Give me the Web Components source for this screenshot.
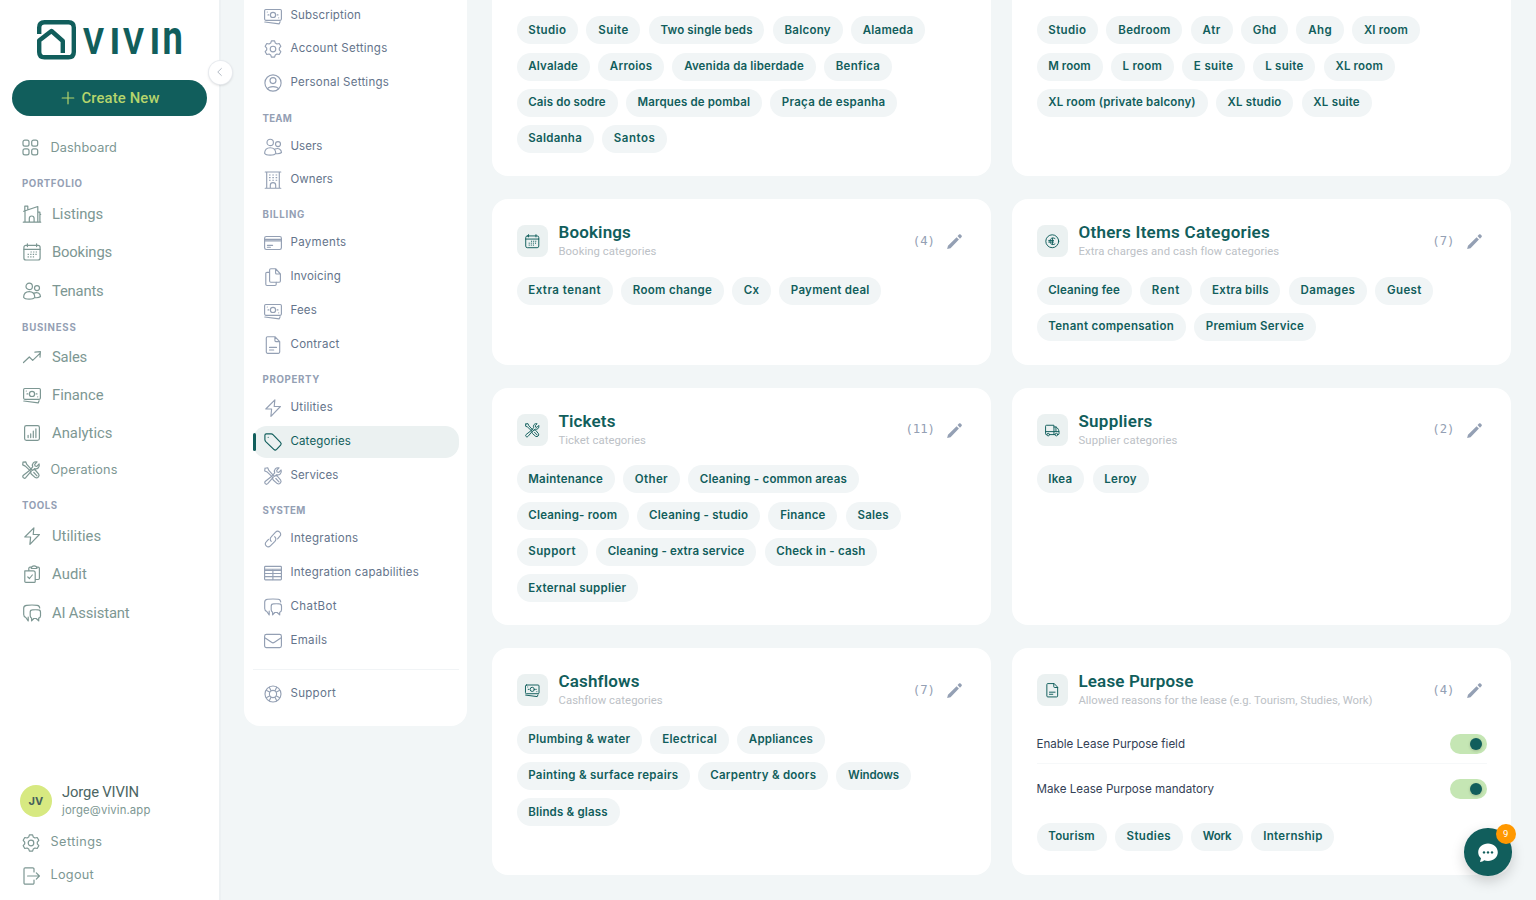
<!DOCTYPE html>
<html lang="en">
<head>
<meta charset="utf-8">
<title>VIVIN – Categories</title>
<style>
html,body{margin:0;height:100%;overflow:hidden}
body{background:#f2f6f7;font-family:Roboto,"Liberation Sans",sans-serif}
</style>
</head>
<body>
<vv-app></vv-app>
<script>
const ICONS = {
grid:'<rect x="1" y="1.2" width="6" height="6" rx="1.9"/><rect x="9.700" y="1.2" width="6" height="6" rx="1.9"/><rect x="1" y="9.900" width="6" height="6" rx="1.9"/><rect x="9.700" y="9.900" width="6" height="6" rx="1.9"/>',
house:'<path d="M.3 17.2h17.4M2 17V6M.7 6.3 14.8 1.5v15.5M1.8 5.7V1.2h3v3.6M14.8 7.2h2.1V17M6.3 17v-3.600a2.4 2.4 0 0 1 4.8 0V17M16.9 9.3h.8"/>',
calendar:'<rect x=".9" y="2.4" width="16.2" height="14.6" rx="2"/><path d="M.9 6.3h16.2M4.4.8v2.8M13.6.8v2.8"/><path stroke-dasharray="1.3 1.3" stroke-linecap="butt" d="M7.5 9h6.6M4.6 11.4h9.5M4.6 13.8h6.6"/>',
users:'<circle cx="6.2" cy="4.4" r="3.2"/><circle cx="14" cy="6.1" r="2.5"/><path d="M.6 15.2c.2-3.8 2.5-5.5 5.6-5.5s5.4 1.7 5.6 5.5c-1.6 2.6-9.7 2.6-11.2 0ZM11.1 11.1c3.1-1.4 6.2 0 6.4 3.4-1 1-3 1.4-5.3 1.2"/>',
trend:'<path d="m.5 14.5 5.800-5.500 3.400 3.400 7-6.800M11.900 4.200l5.500-.5-.4 5.400"/>',
cash:'<rect x=".6" y="2.500" width="16.8" height="10.800" rx="1.2"/><circle cx="9" cy="7.900" r="2.600"/><path d="M3.3 5v.01M14.7 10.800v.01M4 7.900h.8M13.2 7.900h.8M.8 15l14.400 1.900.9-2.200"/>',
chart:'<rect x="1.6" y="1.6" width="14.8" height="14.8" rx="1.8"/><path d="M5.1 13.6v-2.3M7.7 13.6V9.8M10.3 13.6V7M12.9 13.6V4.8"/>',
tools:'<path d="M1 1.2 3.7.8l1.1 2.6 5 5.5M1 1.2.7 3.9l2.6 1.2 5 4.8M10.3 9.2c1-.8 1.7-.9 2.9-.2l3.5 4.2c1.3 2-1.3 4.7-3.4 3.4L9.2 13c-.8-1-.7-2 .1-2.8M11.8 11.5l3.2 3.3M7.8 9.3l-6.4 5c-1.8 1.6.6 4 2.3 2.4l5.6-6.6M8 9l2.7-3.2C9.6 2.7 12 .2 15 .9l-2.3 2.5.4 1.6 1.7.4L17.1 3c.9 2.9-1.4 5.6-4.5 4.7l-2 1.7"/>',
bolt:'<path d="M10.9.8 1.8 10h5.8l-.7 7.4L16.4 7.5h-6.2Z"/>',
audit:'<path d="M1.800 5.800h8.400a2 2 0 0 1 2 2v8.600a1 1 0 0 1-1 1H2.800a1 1 0 0 1-1-1ZM5.800 5.500V3.400a1.2 1.2 0 0 1 1.2-1.2h1.100M14 2.2h1.2a1.2 1.2 0 0 1 1.2 1.2v9.9a1.2 1.2 0 0 1-1.2 1.2h-2.6M8.3 3.500c0-3.600 5.600-3.600 5.600 0ZM4.800 12l1.700 1.500 2.800-3.500"/>',
chat:'<path d="M5.200 13.100v3.800L2.800 13.500C1.300 12.900.7 11.900.7 10.500V4.100C.7 2.400 1.900 1.500 3.600 1.300c3.300-.4 7.400-.4 10.700 0 1.500.2 2.300 1 2.400 2.700M8.600 14.200c-.9-.5-1.400-1.300-1.400-2.400V8.200c0-1.300.7-2.200 2-2.300 2-.2 4.400-.2 6.300 0 1.300.1 2 1 2 2.300v3.600c0 1.400-.7 2.100-1.800 2.400v2.700l-2.500-2.400h-2.400l-2.200 2.400v-2.600"/>',
gear:'<path d="M7.4.9h3.2l.7 2.2 1.600.9 2.300-.5 1.600 2.800-1.500 1.800v1.800l1.500 1.800-1.600 2.800-2.300-.5-1.600.9-.7 2.200H7.400l-.7-2.200-1.600-.9-2.300.5-1.600-2.800 1.500-1.800V8.100L1.200 6.300l1.600-2.800 2.300.5 1.600-.9Z"/><circle cx="9" cy="9" r="2.800"/>',
logout:'<path d="M12 5V2a1.2 1.2 0 0 0-1.2-1.2H3.2A1.2 1.2 0 0 0 2 2v14a1.2 1.2 0 0 0 1.2 1.2h7.6A1.2 1.2 0 0 0 12 16v-3M5.6 9h11.6M14.3 5.9 17.4 9l-3.1 3.1"/>',
profile:'<circle cx="9" cy="9" r="8.1"/><circle cx="9" cy="6.6" r="3"/><path d="M3.6 14.8c1.300-3 9.500-3 10.800 0"/>',
building:'<path d="M1.2 1h15.6M1.2 17.2h15.6M2.7 1v16M15.3 1v16M6.3 17v-2.7a2.7 2.7 0 0 1 5.4 0V17"/><path stroke-dasharray="1.6 1.7" stroke-linecap="butt" d="M5 4h9M5 6.6h9M5 9.2h9"/>',
card:'<rect x=".6" y="2.5" width="16.8" height="13" rx="1.7"/><path d="M.6 5.4h16.8M.6 6.8h16.8M3.4 11.3h5.2M3.4 13.2h3"/>',
files:'<path d="M5.6 4.3H3a1.2 1.2 0 0 0-1.2 1.2v10.8A1.2 1.2 0 0 0 3 17.5h8a1.2 1.2 0 0 0 1.2-1.2v-2.2M11.6.7H6.8a1.2 1.2 0 0 0-1.2 1.2V13a1.2 1.2 0 0 0 1.2 1.2h8.4a1.2 1.2 0 0 0 1.2-1.2V6ZM11.6.7V5a1 1 0 0 0 1 1h3.8"/>',
file:'<path d="M10.9.7H3.5a1.2 1.2 0 0 0-1.2 1.2v14.2a1.2 1.2 0 0 0 1.2 1.2h11a1.2 1.2 0 0 0 1.2-1.2V5.7ZM10.9.7v3.9a1 1 0 0 0 1 1h3.8M5.5 11.4h7M5.5 14h4.2"/>',
tag:'<path d="M.9 2.3c0-1 .5-1.4 1.4-1.4h4.9c.8 0 1.4.3 2 .9l7.3 7.6c1 1 1 1.8.1 2.8l-4 4.2c-1 1-1.8 1-2.8 0L2 8.8C1.3 8 .9 7.5.9 6.7Z"/><path d="M4.2 4.2h.01"/>',
link:'<path d="M7.2 11.4c-1.4-1.4-1.3-3.3 0-4.6l4.4-4.6c2.5-2.7 6.9 1.2 4.3 4l-2.3 2.6M10.7 6.7c1.5 1.3 1.5 3.3.2 4.7l-4.5 4.5c-2.8 2.7-7-1.4-4.2-4.1l2.3-2.5"/>',
table:'<rect x=".6" y="2.4" width="16.8" height="13.4" rx=".8"/><path d="M.6 5.2h16.8M.6 6.5h16.8M.6 9.5h16.8M.6 12.6h16.8M8.9 6.4v9.2"/>',
mail:'<rect x=".6" y="2.4" width="16.8" height="13.2" rx="1.8"/><path d="m1.2 6 6.3 4.3c1 .7 2 .7 3 0L16.8 6"/>',
support:'<circle cx="9" cy="9" r="8"/><circle cx="9" cy="9" r="3.6"/><path d="m5.3 2.2 1.6 3.4M2.2 5.3l3.4 1.6M12.7 2.2l-1.6 3.4M15.8 5.3l-3.4 1.6M5.3 15.8l1.6-3.4M2.2 12.7l3.4-1.6M12.7 15.8l-1.6-3.4M15.8 12.7l-3.4-1.6"/>',
euro:'<circle cx="9" cy="9" r="8"/><path d="M12.3 5.600c-3.400-2.100-6 .1-6 3.400s2.600 5.500 6 3.400M9.200 5.300v7.400M4.600 8h6M4.600 10h6"/>',
truck:'<path d="M2.2 14.4H1.7a1 1 0 0 1-1-1V4a1.2 1.2 0 0 1 1.2-1.2h9.2v11.6M11.1 4.9h2.6c2.5 1.4 3.7 4 3.7 7v1.5a1 1 0 0 1-1 1M5.7 14.4h6.6M.7 10.7h16.5"/><circle cx="4" cy="14.4" r="1.6"/><circle cx="14.2" cy="14.4" r="1.6"/><path d="M13.6 5v5.5"/>',
plus:'<path d="M9 3.2v11.6M3.2 9h11.6"/>',
left:'<path d="M11.5 2.7 5 9l6.5 6.3"/>',
pencil:'<path fill="currentColor" stroke="none" d="M1.200 17l.9-3.600L11.200 4.400l2.500 2.500L4.800 16.100ZM12.200 3.300l1.600-1.700c.5-.5 1.100-.5 1.600 0l1.100 1.100c.5.5.5 1.100 0 1.600L14.800 6Z"/>'
};

const define = (name, css, html, setup) => customElements.define(name, class extends HTMLElement {
  connectedCallback(){
    if (this.shadowRoot) return;
    const root = this.attachShadow({mode:'open'});
    root.innerHTML = `<style>${css}</style>` + (typeof html === 'function' ? html(this) : html);
    if (setup) setup(this, root);
  }
});

/* Single-line label whose tracking is adjusted to fill the width given in "w". */
define('vv-label', ':host{display:block;white-space:nowrap;flex:none}span{display:inline-block}', '<span><slot></slot></span>', (el, root) => {
  const w = +el.getAttribute('w'); if (!w) return;
  const s = root.querySelector('span');
  s.style.letterSpacing = '0px';
  s.style.letterSpacing = (w - s.getBoundingClientRect().width) / el.textContent.length + 'px';
  el.style.width = w + 'px';
});

define('vv-icon', ':host{display:block;width:18px;height:18px;flex:none}svg{display:block;width:100%;height:100%;overflow:visible}',
  el => `<svg viewBox="0 0 18 18" fill="none" stroke="currentColor" stroke-width="${el.getAttribute('sw')||1.1}" stroke-linecap="round" stroke-linejoin="round">${ICONS[el.getAttribute('name')]}</svg>`);

define('vv-logo', `:host{display:block;padding:9px 0 0 36px;height:52px;color:#115e5c}svg{display:block}text{font:700 37px Roboto,sans-serif;fill:currentColor}`,
  `<svg width="170" height="70" viewBox="0 -10 170 70"><path fill="none" stroke="currentColor" stroke-width="4.4" stroke-linejoin="round" d="M3.200 15V8.500Q3.200 3.200 8.500 3.200H32.500Q37.800 3.200 37.800 8.500V33Q37.800 38.300 32.500 38.300H8.500Q3.200 38.300 3.200 33V21.500L15.500 12 26.800 22V34"/>
  <text x="47" y="35" textLength="21" lengthAdjust="spacingAndGlyphs">V</text><text x="73.500" y="35">I</text><text x="87" y="35" textLength="21" lengthAdjust="spacingAndGlyphs">V</text><text x="113.500" y="35">I</text><text transform="translate(126.500 35) scale(.74 1)" style="font-size:49px">n</text></svg>`);

define('vv-nav', `:host{display:flex;align-items:center;flex:none;box-sizing:border-box;color:#7d9793;font-size:14.800px}
  :host([small]){font:12.700px Inter,sans-serif}vv-icon{margin-right:11px}:host([small]) vv-icon{margin-right:10.500px}:host([small]) vv-label{padding-bottom:1.500px}`,
  el => `<vv-icon name="${el.getAttribute('icon')}" sw="1.200"></vv-icon><vv-label w="${el.getAttribute('w')}">${el.getAttribute('text')}</vv-label>`,
  el => { el.style.height = el.getAttribute('h') + 'px'; el.style.marginTop = (el.getAttribute('mt')||0) + 'px';
    el.style.paddingLeft = el.hasAttribute('small') ? '22px' : '23px'; });

define('vv-heading', ':host{display:flex;align-items:center;flex:none;font:700 9.700px Inter,sans-serif;color:#94a0b4}',
  el => `<vv-label w="${el.getAttribute('w')}">${el.getAttribute('text')}</vv-label>`,
  el => { el.style.height = (el.getAttribute('h')||21) + 'px'; el.style.marginTop = (el.getAttribute('mt')||0) + 'px'; });

define('vv-create', `:host{display:flex;align-items:center;box-sizing:border-box;margin:19px 12px 0;height:35.500px;border-radius:18px;background:#115e5c;color:#b6d56c;font-size:14.800px;font-weight:500;padding-left:47px}
  vv-icon{margin-right:4.500px}vv-label{padding-top:1px}`, `<vv-icon name="plus" sw="1.200"></vv-icon><vv-label w="78">Create New</vv-label>`);

define('vv-user', `:host{display:flex;align-items:center;height:36px;padding-left:20px;margin-bottom:7px}
  .a{width:32px;height:32px;border-radius:50%;background:#d7e981;color:#45605c;display:flex;align-items:center;justify-content:center;font:700 11px Inter,sans-serif;margin-right:10px}
  .n{font-size:14.800px;line-height:18px;color:#4c6663;padding-top:1px}.e{font:11.300px/18px Inter,sans-serif;color:#7d9793}`,
  `<div class="a"><vv-label w="15">JV</vv-label></div><div><vv-label class="n" w="77">Jorge VIVIN</vv-label><vv-label class="e" w="88.500">jorge@vivin.app</vv-label></div>`);

define('vv-sidebar', `:host{display:flex;flex-direction:column;position:relative;box-sizing:border-box;width:221px;height:900px;background:#fff;border-right:2px solid #edf1f3;flex:none}
  vv-heading{padding-left:22px}.foot{margin-top:auto;padding-bottom:8px}
  .toggle{position:absolute;left:208.500px;top:60.500px;width:23px;height:23px;border-radius:50%;background:#fff;box-shadow:0 0 0 1px #e8ebef,0 1px 3px #0003;display:flex;align-items:center;justify-content:center;color:#b4bcc6}
  .toggle vv-icon{width:10px;height:10px}`,
  () => { const n=(icon,text,w,h=38,mt=0,s='')=>`<vv-nav icon="${icon}" text="${text}" w="${w}" h="${h}" mt="${mt}" ${s}></vv-nav>`;
  return `<vv-logo></vv-logo><vv-create></vv-create>
  ${n('grid','Dashboard',66.5,34,15.5,'small')}
  <vv-heading text="PORTFOLIO" w="60.500" mt="7" h="23"></vv-heading>
  ${n('house','Listings',51)}${n('calendar','Bookings',60)}${n('users','Tenants',51.5,38,1)}
  <vv-heading text="BUSINESS" w="54.500" mt="7"></vv-heading>
  ${n('trend','Sales',35)}${n('cash','Finance',51.5)}${n('chart','Analytics',60.5)}${n('tools','Operations',67,36,0,'small')}
  <vv-heading text="TOOLS" w="35.500" mt="7"></vv-heading>
  ${n('bolt','Utilities',49,38,1)}${n('audit','Audit',35)}${n('chat','AI Assistant',77.5,38,1)}
  <div class="foot"><vv-user></vv-user>${n('gear','Settings',52,34,0.5,'small')}${n('logout','Logout',43.5,33,-.5,'small')}</div>
  <div class="toggle"><vv-icon name="left" sw="1.800"></vv-icon></div>`; });

define('vv-setting', `:host{display:flex;align-items:center;box-sizing:border-box;height:32px;padding-left:11px;flex:none;font:11.500px Inter,sans-serif;color:#64748b;border-radius:14px;position:relative}
  vv-icon{color:#94a0b4;margin-right:9px}vv-label{padding-bottom:1.500px}
  :host([active]){background:#ebf1f1;color:#115e5c}:host([active]) vv-icon{color:#115e5c}
  :host([active])::before{content:"";position:absolute;left:0;top:7px;width:3px;height:18px;border-radius:1.500px;background:#115e5c}`,
  el => `<vv-icon name="${el.getAttribute('icon')}" sw="1.150"></vv-icon><vv-label w="${el.getAttribute('w')}">${el.getAttribute('text')}</vv-label>`,
  el => el.style.marginTop = el.getAttribute('mt') + 'px');

define('vv-settings', `:host{display:block;box-sizing:border-box;width:223px;height:725.500px;background:#fff;border-radius:0 0 16px 16px;padding:0 8.500px;flex:none;margin-left:23px;overflow:hidden}
  .in{display:flex;flex-direction:column}vv-heading{padding-left:10px}hr{border:0;height:1px;width:100%;background:#f1f4f6;margin:12.500px 0 0;flex:none}`,
  () => { const s=(icon,text,w,mt=2,a='')=>`<vv-setting icon="${icon}" text="${text}" w="${w}" mt="${mt}" ${a}></vv-setting>`;
  const h=(text,w,mt)=>`<vv-heading text="${text}" w="${w}" mt="${mt}" h="20"></vv-heading>`;
  return `<div class="in">${s('cash','Subscription',70.5,-.5)}${s('gear','Account Settings',97,1)}${s('profile','Personal Settings',98.5)}
  ${h('TEAM',29.5,9.5)}${s('users','Users',32,2.5)}${s('building','Owners',42.5,1)}
  ${h('BILLING',42.5,9)}${s('card','Payments',56)}${s('files','Invoicing',50.5)}${s('cash','Fees',26.5)}${s('file','Contract',49)}
  ${h('PROPERTY',57.5,9)}${s('bolt','Utilities',42.5,2)}${s('tag','Categories',60.5,2.5,'active')}${s('tools','Services',48,1.5)}
  ${h('SYSTEM',43,9)}${s('link','Integrations',68)}${s('table','Integration capabilities',128.5)}${s('chat','ChatBot',46.5)}${s('mail','Emails',37)}
  <hr>${s('support','Support',45.5,7.5)}</div>`; });

define('vv-chip', ':host{display:flex;align-items:center;justify-content:center;box-sizing:border-box;height:28px;padding-bottom:1.500px;border-radius:14px;background:#f1f5f6;color:#115e5c;font:600 11.500px Inter,sans-serif;flex:none}',
  el => `<vv-label w="${el.getAttribute('w')-23.5}">${el.getAttribute('text')}</vv-label>`, el => el.style.width = el.getAttribute('w') + 'px');

define('vv-chips', ':host{display:flex;flex-wrap:wrap;gap:8.300px}', el => el.getAttribute('items').split(';').map(i => {
  const [t,w] = i.split('|'); return `<vv-chip text="${t.replace('&','&amp;')}" w="${w}"></vv-chip>`; }).join(''));

define('vv-switch', ':host{display:flex;align-items:center;justify-content:flex-end;box-sizing:border-box;width:37px;height:20px;border-radius:10px;background:#c5e6b4;padding-right:4.500px}i{width:12px;height:12px;border-radius:50%;background:#115e5c;box-shadow:0 1px 3px #0003}', '<i></i>');

define('vv-toggle-row', ':host{display:flex;align-items:center;justify-content:space-between;font:11.600px Inter,sans-serif;color:#334155;box-sizing:border-box}',
  el => `<vv-label w="${el.getAttribute('w')}">${el.getAttribute('text')}</vv-label><vv-switch></vv-switch>`);

define('vv-card', `:host{display:block;box-sizing:border-box;background:#fff;border-radius:16px;padding:26.500px 24px 0 24.500px}
  :host([cut]){border-radius:0 0 16px 16px;padding-top:16.300px}
  header{display:flex;align-items:center;height:32px;margin-bottom:19.300px}
  .b{width:31.500px;height:32px;border-radius:8px;background:#ebf1f1;color:#115e5c;display:flex;align-items:center;justify-content:center;margin-right:10.500px;flex:none}
  .b vv-icon{width:14.500px;height:14.500px}
  .t{font-size:17px;font-weight:600;color:#115e5c;line-height:20px}.s{font-size:11.300px;color:#bcc1c6;line-height:17px;padding-top:1px}
  .h{margin-top:-1px}.c{margin-left:auto;font:12.300px "DejaVu Sans Mono",monospace;color:#94a0b4;margin-right:11px;margin-top:-1.500px}
  .p{color:#94a0b4;width:17px;height:17px;margin-right:4px}`,
  el => { const g = a => el.getAttribute(a); return (g('name') ? `<header><div class="b"><vv-icon name="${g('icon')}" sw="1.200"></vv-icon></div>
  <div class="h"><vv-label class="t" w="${g('tw')}">${g('name')}</vv-label><vv-label class="s" w="${g('sw')}">${g('sub')}</vv-label></div>
  <span class="c">(${g('count')})</span><vv-icon class="p" name="pencil"></vv-icon></header>` : '') + `<slot></slot>`; });

define('vv-board', `:host{display:grid;grid-template-columns:499px 498.500px;grid-template-rows:176px 166px 237.500px 227.500px;column-gap:21px;row-gap:22.800px;margin-left:25px;flex:none}
  .r1{height:39px;border-bottom:1px solid #f6f8f9;margin-top:-1px}.r2{height:51px;margin-bottom:8px}`,
  `<vv-card cut><vv-chips items="Studio|61.7;Suite|54;Two single beds|115.6;Balcony|70;Alameda|74;Alvalade|73.3;Arroios|66;Avenida da liberdade|143.3;Benfica|68;Cais do sodre|101;Marques de pombal|136;Praça de espanha|127;Saldanha|77.3;Santos|65"></vv-chips></vv-card>
  <vv-card cut><vv-chips items="Studio|61.7;Bedroom|76;Atr|42;Ghd|47;Ahg|47.5;XI room|67.5;M room|66;L room|63;E suite|63;L suite|62;XL room|71;XL room (private balcony)|171;XL studio|77.5;XL suite|70"></vv-chips></vv-card>
  <vv-card icon="calendar" name="Bookings" tw="72.500" sub="Booking categories" sw="98" count="4"><vv-chips items="Extra tenant|96.3;Room change|102.7;Cx|38.7;Payment deal|102.3"></vv-chips></vv-card>
  <vv-card icon="euro" name="Others Items Categories" tw="191.500" sub="Extra charges and cash flow categories" sw="200.500" count="7"><vv-chips items="Cleaning fee|95.2;Rent|52;Extra bills|80.2;Damages|78.3;Guest|58;Tenant compensation|149.3;Premium Service|121.6"></vv-chips></vv-card>
  <vv-card icon="tools" name="Tickets" tw="57" sub="Ticket categories" sw="87.500" count="11"><vv-chips items="Maintenance|98.3;Other|56.7;Cleaning - common areas|170.7;Cleaning- room|112.5;Cleaning - studio|122.8;Finance|69;Sales|55;Support|71.2;Cleaning - extra service|160.3;Check in - cash|112.6;External supplier|121.6"></vv-chips></vv-card>
  <vv-card icon="truck" name="Suppliers" tw="74" sub="Supplier categories" sw="99" count="2"><vv-chips items="Ikea|47.8;Leroy|56"></vv-chips></vv-card>
  <vv-card icon="cash" name="Cashflows" tw="81" sub="Cashflow categories" sw="104" count="7"><vv-chips items="Plumbing & water|125.7;Electrical|78.3;Appliances|87.7;Painting & surface repairs|173.7;Carpentry & doors|129.5;Windows|74.5;Blinds & glass|103"></vv-chips></vv-card>
  <vv-card icon="file" name="Lease Purpose" tw="115" sub="Allowed reasons for the lease (e.g. Tourism, Studies, Work)" sw="294" count="4"><vv-toggle-row class="r1" text="Enable Lease Purpose field" w="148.500"></vv-toggle-row><vv-toggle-row class="r2" text="Make Lease Purpose mandatory" w="177.500"></vv-toggle-row><vv-chips items="Tourism|70;Studies|68;Work|52;Internship|83"></vv-chips></vv-card>`);

define('vv-chat', `:host{position:absolute;left:1464px;top:828px;width:47.500px;height:47.500px;border-radius:50%;background:#115e5c;box-shadow:0 5px 14px #0000002e;display:flex;align-items:center;justify-content:center}
  b{position:absolute;left:32px;top:-4.500px;width:19.500px;height:20px;border-radius:50%;background:#ff9800;color:#fff;font-size:9.500px;font-weight:400;display:flex;align-items:center;justify-content:center}svg{margin-top:2px}`,
  `<svg width="22" height="22" viewBox="0 0 22 22"><path fill="#fff" d="M11 1.500c5.400 0 9.800 3.800 9.800 8.700s-4.400 8.800-9.800 8.800c-1.400 0-2.700-.3-3.900-.8-1 1-2.500 1.700-4.100 1.800l1-3.700C2.300 14.800 1.200 12.600 1.200 10.200 1.200 5.300 5.600 1.500 11 1.500Z"/><g fill="#115e5c"><circle cx="7" cy="10.400" r="1.200"/><circle cx="11" cy="10.400" r="1.200"/><circle cx="15" cy="10.400" r="1.200"/></g></svg><b>9</b>`);

define('vv-app', ':host{display:flex;align-items:flex-start;width:1536px;height:900px;overflow:hidden;position:relative;background:#f2f6f7}',
  '<vv-sidebar></vv-sidebar><vv-settings></vv-settings><vv-board></vv-board><vv-chat></vv-chat>');
</script>
</body>
</html>
